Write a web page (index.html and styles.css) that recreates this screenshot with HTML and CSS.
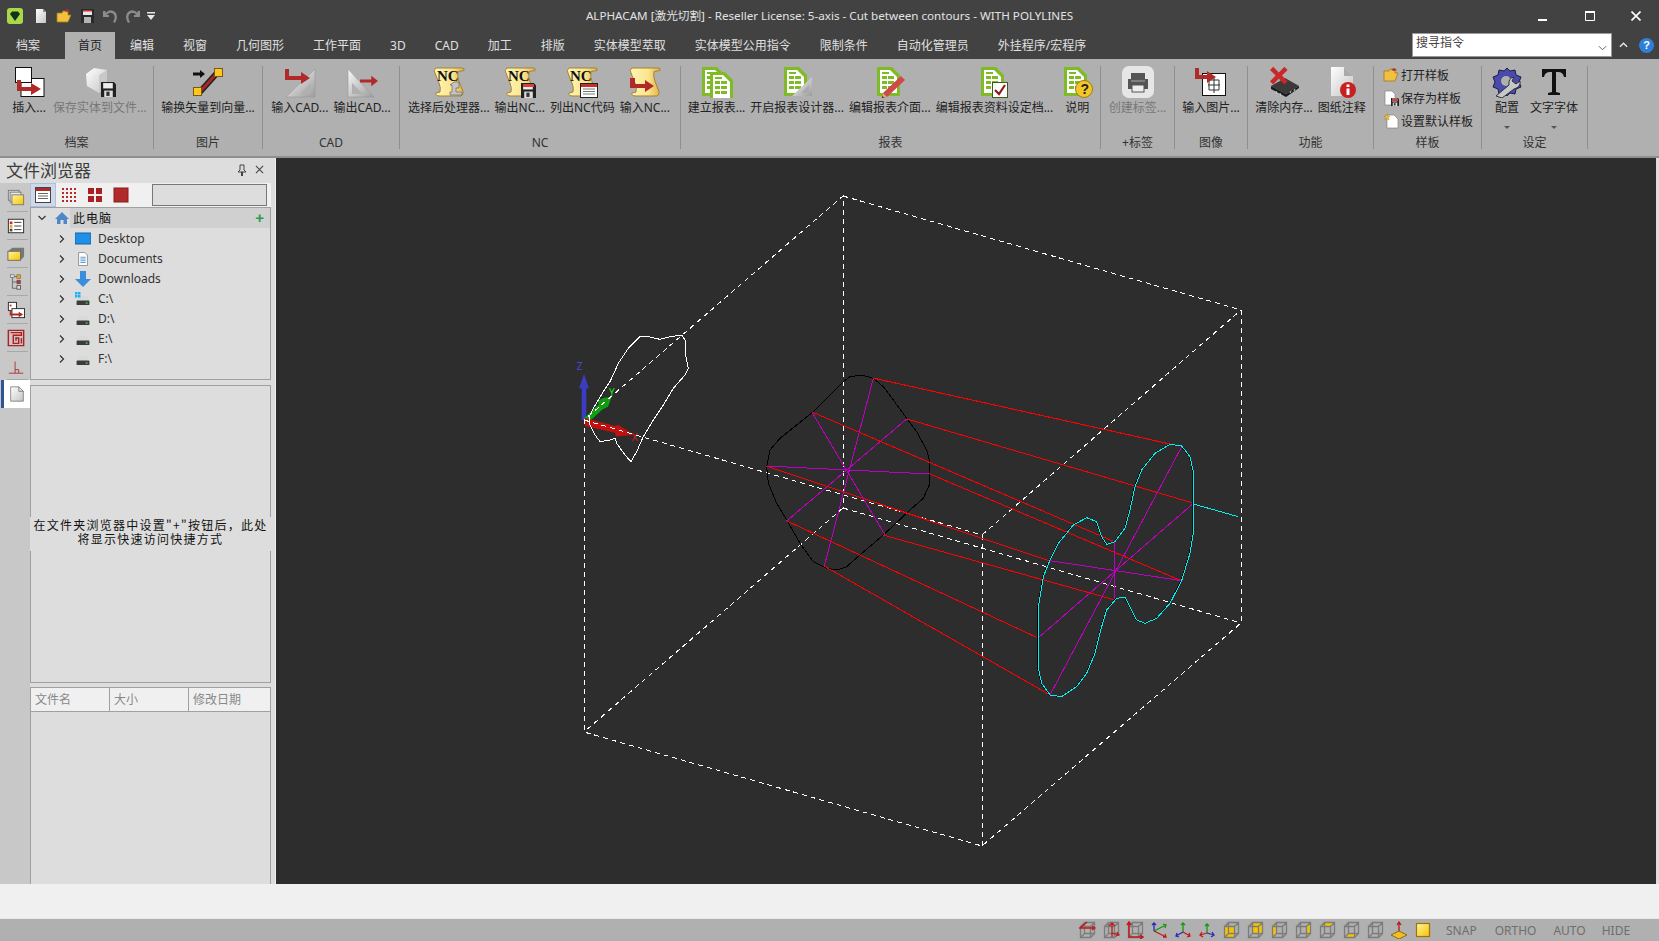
FILE: index.html
```html
<!DOCTYPE html>
<html lang="zh">
<head>
<meta charset="utf-8">
<title>ALPHACAM</title>
<link rel="stylesheet" href="styles.css">
</head>
<body>
<svg class="defs" width="0" height="0">
  <defs>
    <linearGradient id="gs" x1="0" y1="0" x2="1" y2="0"><stop offset="0" stop-color="#fff6b8"/><stop offset=".6" stop-color="#fbe58c"/><stop offset="1" stop-color="#e0b04c"/></linearGradient>
    <linearGradient id="gy" x1="0" y1="0" x2="1" y2="1"><stop offset="0" stop-color="#fff4a0"/><stop offset="1" stop-color="#f5c400"/></linearGradient>
    <linearGradient id="gw" x1="0" y1="0" x2="1" y2="1"><stop offset="0" stop-color="#fff"/><stop offset="1" stop-color="#c4c4c4"/></linearGradient>
    <linearGradient id="gt" x1="0" y1="0" x2="1" y2="1"><stop offset="0" stop-color="#fafafa"/><stop offset="1" stop-color="#9c9c9c"/></linearGradient>
    <symbol id="scrollbg" viewBox="0 0 32 32"><path d="M3 2H29q3 0 2 2.500l-6 1q-1 5 1 10t4 10q1 3-2 4.500H7q-5 0-4-3l4-1q1-4-1-9T2 7Q0 4 3 2z" fill="url(#gs)" stroke="#a8812c"/></symbol>
    <symbol id="scroll" viewBox="0 0 32 32"><use href="#scrollbg"/><text x="4" y="15" class="nc">NC</text></symbol>
    <symbol id="floppy" viewBox="0 0 14 14"><path d="M0 0H12L14 2V14H0z" fill="#222"/><rect x="2" y="1" width="9" height="5" fill="#eee"/><rect x="3" y="8" width="8" height="6" fill="#ddd"/><rect x="5" y="9" width="3" height="4" fill="#333"/></symbol>
    <symbol id="arrow" viewBox="0 0 24 14"><path d="M0 5H15V0L24 7 15 14V9H0z" fill="#b02a2a"/></symbol>
    <symbol id="rep" viewBox="0 0 32 32"><path d="M3 1H18L26 9V30H3z" fill="#7fba27"/><path d="M6 4H16L23 11V27H6z" fill="#fff"/><path d="M8 6h7v2H8zM8 10h5v3H8zM14 10h6v3h-6zM8 15h5v3H8zM14 15h6v3h-6zM8 20h5v3H8zM14 20h6v3h-6z" fill="#7fba27"/></symbol>
    <symbol id="cube" viewBox="0 0 18 18"><path d="M2.500 5.500h10v11h-10zM6.500 1.500h10v11h-10zM2.500 5.500l4-4M12.500 5.500l4-4M2.500 16.500l4-4M12.500 16.500l4-4" fill="none" stroke="#7c7c7c" stroke-width="1.300"/></symbol>
    <symbol id="drive" viewBox="0 0 16 12"><path d="M3 1H12L15 6H1z" fill="#d9d9d9"/><rect x="1" y="6" width="14" height="5" rx="1" fill="#3c3c3c"/><rect x="11" y="8" width="2" height="1.500" fill="#4bd04b"/></symbol>
  </defs>
</svg>

<header class="titlebar">
  <div class="qat">
    <svg class="logo" viewBox="0 0 16 16"><rect width="16" height="16" rx="3" fill="#a9d94a"/><path d="M8 13L3 6 5 3.500H11L13 6z" fill="#17301a"/></svg>
    <svg class="qi" viewBox="0 0 16 16"><path d="M3 1H10L13 4V15H3z" fill="url(#gw)"/><path d="M10 1V4H13z" fill="#8a8a8a"/></svg>
    <svg class="qi" viewBox="0 0 16 16"><path d="M1 5H6L7 3H12V7H15L12 14H1z" fill="#f0c040" stroke="#a87818" stroke-width=".8"/><path d="M8 3l3-2 3 2-3 1z" fill="#b03030"/></svg>
    <svg class="qi" viewBox="0 0 16 16"><rect x="2" y="1" width="13" height="14" fill="#2a2a2a"/><rect x="4" y="2" width="9" height="5" fill="#e8e8e8"/><rect x="4" y="2" width="9" height="1.500" fill="#c03030"/><rect x="5" y="9" width="7" height="6" fill="#b4b4b4"/></svg>
    <svg class="qi" viewBox="0 0 16 16"><path d="M1 3V9H7V7H4.500Q8 3 11.500 6 14 9 11 14L13 15Q17 8 13 4 8 0 3.500 5V3z" fill="#8c8c8c"/></svg>
    <svg class="qi" viewBox="0 0 16 16"><path d="M15 3V9H9V7H11.500Q8 3 4.500 6 2 9 5 14L3 15Q-1 8 3 4 8 0 12.500 5V3z" fill="#8c8c8c"/></svg>
    <svg class="qd" viewBox="0 0 8 8"><path d="M0 0H8V1.500H0zM0 3H8L4 8z" fill="#e6e6e6"/></svg>
  </div>
  <div class="apptitle">ALPHACAM [激光切割] - Reseller License: 5-axis - Cut between contours - WITH POLYLINES</div>
  <div class="winbtns">
    <svg class="wmin" viewBox="0 0 10 10"><rect y="7" width="9" height="2" fill="#fff"/></svg>
    <svg class="wmax" viewBox="0 0 10 10"><path d="M.5 1.500h9v8h-9z" fill="none" stroke="#fff"/><rect width="10" height="2" fill="#fff"/></svg>
    <svg class="wcls" viewBox="0 0 10 10"><path d="M.5.5l9 9M9.500.5l-9 9" stroke="#fff" stroke-width="1.600"/></svg>
  </div>
</header>

<nav class="tabs">
  <div class="tab first">档案</div><div class="tab active">首页</div><div class="tab">编辑</div><div class="tab">视窗</div><div class="tab">几何图形</div><div class="tab">工作平面</div><div class="tab">3D</div><div class="tab">CAD</div><div class="tab">加工</div><div class="tab">排版</div><div class="tab">实体模型萃取</div><div class="tab">实体模型公用指令</div><div class="tab">限制条件</div><div class="tab">自动化管理员</div><div class="tab">外挂程序/宏程序</div>
  <div class="search"><span>搜寻指令</span><svg class="chev" viewBox="0 0 10 6"><path d="M1 1l4 4 4-4" fill="none" stroke="#555"/></svg></div>
  <svg class="up" viewBox="0 0 10 6"><path d="M1 5l4-4 4 4" fill="none" stroke="#e8e8e8" stroke-width="1.600"/></svg>
  <div class="help">?</div>
</nav>

<section class="ribbon">
  <div class="group g1">
    <div class="btns">
      <div class="rb"><svg class="ico" viewBox="0 0 32 32"><rect x="8" y="12.500" width="23" height="18" fill="#fff" stroke="#111"/><rect x="2.500" y="1.500" width="16" height="15" fill="#fff" stroke="#111"/><path d="M4 14h4v7H18V17l10 6-10 6V25H4z" fill="#b02a2a"/></svg><span>插入...</span></div>
      <div class="rb off"><svg class="ico" viewBox="0 0 32 32"><path d="M2 8L10 2 23 4V19L15 27 3 20z" fill="url(#gw)"/><path d="M15 9L23 4V19L15 27z" fill="#c8c8c8"/><use href="#floppy" x="17" y="16" width="15" height="15"/></svg><span>保存实体到文件...</span></div>
    </div>
    <div class="glabel">档案</div>
  </div>
  <div class="group g2">
    <div class="btns">
      <div class="rb"><svg class="ico" viewBox="0 0 32 32"><path d="M7 27L25 7" stroke="#222" stroke-width="6"/><path d="M7 27L25 7" stroke="#a82828" stroke-width="3"/><rect x="1.500" y="21.500" width="8" height="8" fill="#ffc820" stroke="#7a5a10"/><rect x="22.500" y="2.500" width="8" height="8" fill="#ffc820" stroke="#7a5a10"/><path d="M1 6.500H8V4L13 8 8 12V9.500H1z" fill="#111"/></svg><span>输换矢量到向量...</span></div>
    </div>
    <div class="glabel">图片</div>
  </div>
  <div class="group g3">
    <div class="btns">
      <div class="rb"><svg class="ico" viewBox="0 0 32 32"><path d="M31 3V31H2z" fill="url(#gt)" stroke="#999" stroke-width=".6"/><path d="M27 17V28H16z" fill="#b0b0b0"/><path d="M1 3H5V10H17V6L26 12 17 18V14H1z" fill="#b02a2a"/></svg><span>输入CAD...</span></div>
      <div class="rb"><svg class="ico" viewBox="0 0 32 32"><path d="M2 3V31H28z" fill="url(#gt)" stroke="#999" stroke-width=".6"/><path d="M6 17V28H17z" fill="#b0b0b0"/><use href="#arrow" x="14" y="9" width="18" height="12"/></svg><span>输出CAD...</span></div>
    </div>
    <div class="glabel">CAD</div>
  </div>
  <div class="group g4">
    <div class="btns">
      <div class="rb"><svg class="ico" viewBox="0 0 32 32"><use href="#scroll"/><path d="M21 16h5v6h-3v4h6v3H17v-3h2v-7h-2z" fill="#c4c4c4" stroke="#666" stroke-width=".7"/></svg><span>选择后处理器...</span></div>
      <div class="rb"><svg class="ico" viewBox="0 0 32 32"><use href="#scroll"/><use href="#floppy" x="17" y="17" width="15" height="15"/><rect x="19" y="18" width="11" height="3" fill="#d84040"/></svg><span>输出NC...</span></div>
      <div class="rb"><svg class="ico" viewBox="0 0 32 32"><use href="#scroll"/><rect x="14.500" y="17.500" width="17" height="14" fill="#fff" stroke="#222"/><rect x="15" y="18" width="16" height="3" fill="#c03030"/><path d="M17 23h12M17 25.500h12M17 28h12" stroke="#777"/></svg><span>列出NC代码</span></div>
      <div class="rb"><svg class="ico" viewBox="0 0 32 32"><use href="#scrollbg"/><path d="M1 12H6V18H16V14L25 20 16 26V22H1z" fill="#b02a2a"/></svg><span>输入NC...</span></div>
    </div>
    <div class="glabel">NC</div>
  </div>
  <div class="group g5">
    <div class="btns">
      <div class="rb"><svg class="ico" viewBox="0 0 32 32"><use href="#rep" x="-2" y="0" width="32" height="32"/><use href="#rep" x="6" y="5" width="32" height="32"/></svg><span>建立报表...</span></div>
      <div class="rb"><svg class="ico" viewBox="0 0 32 32"><use href="#rep"/><path d="M31 11V30H11z" fill="url(#gt)"/><path d="M28 19V27H20z" fill="#aaa"/></svg><span>开启报表设计器...</span></div>
      <div class="rb"><svg class="ico" viewBox="0 0 32 32"><use href="#rep"/><path d="M27 10l4 4-18 17-5 1 1-5z" fill="#d04848"/><path d="M8 32l1-5 4 4z" fill="#d8b060"/><path d="M8 32l.5-2 1.500 1.500z" fill="#111"/></svg><span>编辑报表介面...</span></div>
      <div class="rb"><svg class="ico" viewBox="0 0 32 32"><use href="#rep"/><rect x="14.500" y="16.500" width="15" height="15" fill="#fff" stroke="#3a5a20"/><path d="M17 24l4 4 6-9" fill="none" stroke="#901818" stroke-width="2.200"/></svg><span>编辑报表资料设定档...</span></div>
      <div class="rb wide"><svg class="ico" viewBox="0 0 32 32"><use href="#rep"/><circle cx="23" cy="23" r="8.500" fill="#f2c628" stroke="#a07a10"/><text x="19.500" y="28" class="qm">?</text></svg><span>说明</span></div>
    </div>
    <div class="glabel">报表</div>
  </div>
  <div class="group g6">
    <div class="btns">
      <div class="rb off"><svg class="ico" viewBox="0 0 32 32"><rect width="32" height="32" rx="7" fill="#e6e6e6"/><path d="M9 7H23V13H9zM6 13H26V23H6z" fill="#555"/><rect x="10" y="19" width="12" height="7" fill="#eee" stroke="#555"/><path d="M9 15h14" stroke="#aaa"/></svg><span>创建标签...</span></div>
    </div>
    <div class="glabel">+标签</div>
  </div>
  <div class="group g7">
    <div class="btns">
      <div class="rb"><svg class="ico" viewBox="0 0 32 32"><rect x="7.500" y="7.500" width="23" height="22" fill="#fff" stroke="#111"/><path d="M19 11V27M13 19H25M14 14h10v10H14z" fill="none" stroke="#333"/><path d="M0 2H4V9H12V5L21 11 12 17V13H0z" fill="#b02a2a"/></svg><span>输入图片...</span></div>
    </div>
    <div class="glabel">图像</div>
  </div>
  <div class="group g8">
    <div class="btns">
      <div class="rb"><svg class="ico" viewBox="0 0 32 32"><path d="M3 20L17 12 31 20 18 28z" fill="#3a3a3a"/><path d="M3 20L18 28V31L3 23zM18 28L31 20V22L18 31z" fill="#1c1c1c"/><path d="M8 25l1 3M12 27l1 3M22 27l1-2M26 25l1-2" stroke="#ccc"/><path d="M4 1L11 8 18 1 22 5 15 12 22 19 18 23 11 16 4 23 0 19 7 12 0 5z" transform="translate(2 0) scale(.8)" fill="#c82828"/></svg><span>清除内存...</span></div>
      <div class="rb"><svg class="ico" viewBox="0 0 32 32"><path d="M5 1H18L27 10V30H5z" fill="url(#gw)"/><path d="M18 1V10H27z" fill="#aaa"/><circle cx="22" cy="24" r="8" fill="#c82020"/><path d="M20.500 22.500h3V29h-3zM20.500 18.500h3v2.500h-3z" fill="#fff"/></svg><span>图纸注释</span></div>
    </div>
    <div class="glabel">功能</div>
  </div>
  <div class="group g9">
    <div class="stack">
      <div class="sb"><svg class="si" viewBox="0 0 16 16"><path d="M1 4H6L7 2H12V6H15L12 14H1z" fill="#f0c040" stroke="#a87818" stroke-width=".8"/><path d="M8 3l3-2 3 2-3 1z" fill="#b03030"/></svg><span>打开样板</span></div>
      <div class="sb"><svg class="si" viewBox="0 0 16 16"><path d="M2 1H9L12 4V15H2z" fill="#fff" stroke="#777" stroke-width=".6"/><use href="#floppy" x="8" y="8" width="8" height="8"/><rect x="9" y="9" width="6" height="2" fill="#d84040"/></svg><span>保存为样板</span></div>
      <div class="sb"><svg class="si" viewBox="0 0 16 16"><path d="M4 2H11L15 6V15H4z" fill="#fff" stroke="#777" stroke-width=".6"/><path d="M4 1l1 2 2 0-1.500 1.500L6 7 4 5.500 2 7l.5-2.500L1 3l2 0z" fill="#f0c020" stroke="#a07a10" stroke-width=".4"/></svg><span>设置默认样板</span></div>
    </div>
    <div class="glabel">样板</div>
  </div>
  <div class="group g10">
    <div class="btns">
      <div class="rb"><svg class="ico" viewBox="0 0 32 32"><path d="M16 2l3 3 5-1 1 5 5 2-2 5 2 5-5 2-1 5-5-1-3 3-3-3-5 1-1-5-5-2 2-5-2-5 5-2 1-5 5 1z" fill="#4a4aa8" stroke="#1c1c50"/><circle cx="15" cy="15" r="5" fill="#b0b0b0"/><path d="M5 30L18 19Q17 12 23 11L21 15 25 18 29 15Q30 21 23 23L11 32z" fill="#c8c8c8" stroke="#333"/></svg><span>配置</span><svg class="drop" viewBox="0 0 6 3"><path d="M0 0H6L3 3z" fill="#555"/></svg></div>
      <div class="rb"><svg class="ico" viewBox="0 0 32 32"><path d="M4 3H28V11H26Q25 6 20 6H18V26L22 27V29H10V27L14 26V6H12Q7 6 6 11H4z" fill="#111"/></svg><span>文字字体</span><svg class="drop" viewBox="0 0 6 3"><path d="M0 0H6L3 3z" fill="#555"/></svg></div>
    </div>
    <div class="glabel">设定</div>
  </div>
</section>

<main class="main">
  <aside class="panel">
    <div class="phead">
      <div class="ptitle">文件浏览器</div>
      <svg class="pin" viewBox="0 0 10 12"><path d="M3 1H7V6L9 8H1L3 6zM4.500 8V12H5.500V8z" fill="none" stroke="#444"/></svg>
      <svg class="pclose" viewBox="0 0 10 10"><path d="M1 1l8 8M9 1l-8 8" stroke="#444" stroke-width="1.200"/></svg>
    </div>
    <div class="pbody">
      <div class="side">
        <div class="si-item"><svg class="sic" viewBox="0 0 20 20"><rect x="1.500" y="1.500" width="12" height="11" fill="#ddd" stroke="#777"/><rect x="3.500" y="3.500" width="12" height="11" fill="#e8e8e8" stroke="#777"/><rect x="5.500" y="6.500" width="13" height="11" fill="url(#gy)" stroke="#777"/></svg></div>
        <div class="si-item"><svg class="sic" viewBox="0 0 20 20"><rect x="1.500" y="2.500" width="17" height="15" fill="#fff" stroke="#222"/><rect x="3" y="5" width="3" height="3" fill="#c03030"/><rect x="3" y="9" width="3" height="3" fill="#e8a820"/><rect x="3" y="13" width="3" height="3" fill="#4a4a4a"/><path d="M8 6h8M8 10h8M8 14h8" stroke="#333"/></svg></div>
        <div class="si-item"><svg class="sic" viewBox="0 0 20 20"><path d="M1 7L6 3H19V13L15 17V7z" fill="#777"/><rect x="1" y="7" width="14" height="10" fill="url(#gy)" stroke="#666"/></svg></div>
        <div class="si-item"><svg class="sic" viewBox="0 0 20 20"><path d="M6 4V17H11M6 10H11M6 4H11" fill="none" stroke="#666"/><rect x="11" y="2" width="4" height="4" fill="#e8a820" stroke="#555" stroke-width=".6"/><rect x="11" y="8" width="4" height="4" fill="#c03030" stroke="#555" stroke-width=".6"/><rect x="11" y="14" width="4" height="4" fill="#ddd" stroke="#555"/><rect x="4" y="2" width="4" height="3" fill="#ddd" stroke="#555" stroke-width=".6"/></svg></div>
        <div class="si-item"><svg class="sic" viewBox="0 0 20 20"><rect x="1.500" y="1.500" width="9" height="9" fill="#fff" stroke="#222"/><rect x="5.500" y="8.500" width="14" height="10" fill="#fff" stroke="#222"/><path d="M3 4h2v2H3z" fill="#c03030"/><path d="M3 10h2v4h8v-2l5 3-5 3v-2H3z" fill="#b02a2a"/></svg></div>
        <div class="si-item"><svg class="sic" viewBox="0 0 20 20"><path d="M1.500 1.500H18.500V18.500H1.500zM4 4H16V7H7V16H13V10H10V13M16 10V16" fill="none" stroke="#b02020" stroke-width="1.600"/></svg></div>
        <div class="si-item"><svg class="sic" viewBox="0 0 20 20"><path d="M2 18H18M9 5V18M9 14H13V18" fill="none" stroke="#a83030"/></svg></div>
        <div class="si-item sel"><svg class="sic" viewBox="0 0 20 20"><path d="M3 2H12L17 7V18H3z" fill="url(#gw)" stroke="#555" stroke-width=".7"/><path d="M12 2V7H17" fill="none" stroke="#555" stroke-width=".7"/></svg></div>
      </div>
      <div class="panes">
        <div class="ptool">
          <div class="vb cur"><svg class="vi" viewBox="0 0 16 16"><rect x=".5" y=".5" width="15" height="15" fill="#fff" stroke="#444"/><rect x="1" y="1" width="14" height="3" fill="#b02a2a"/><path d="M3 6.500h10M3 9h10M3 11.500h10" stroke="#666"/></svg></div>
          <div class="vb"><svg class="vi" viewBox="0 0 16 16"><path d="M1 1h2v2H1zM5 1h2v2H5zM9 1h2v2H9zM13 1h2v2h-2zM1 5h2v2H1zM5 5h2v2H5zM9 5h2v2H9zM13 5h2v2h-2zM1 9h2v2H1zM5 9h2v2H5zM9 9h2v2H9zM13 9h2v2h-2zM1 13h2v2H1zM5 13h2v2H5zM9 13h2v2H9zM13 13h2v2h-2z" fill="#b02a2a"/></svg></div>
          <div class="vb"><svg class="vi" viewBox="0 0 16 16"><path d="M1 1h6v6H1zM9 1h6v6H9zM1 9h6v6H1zM9 9h6v6H9z" fill="#a82020"/></svg></div>
          <div class="vb"><svg class="vi" viewBox="0 0 16 16"><rect x="1" y="1" width="14" height="14" fill="#b02a2a" stroke="#8a1a1a"/></svg></div>
          <div class="pfilter"></div>
        </div>
        <div class="tree">
          <div class="troot">
            <svg class="tw" viewBox="0 0 10 10"><path d="M1.500 3L5 6.500 8.500 3" fill="none" stroke="#333" stroke-width="1.200"/></svg>
            <svg class="home" viewBox="0 0 14 14"><path d="M7 1L14 8H12V13H8.500V9H5.500V13H2V8H0z" fill="#4f87c9"/></svg>
            <div class="rootname"><span>此电脑</span><b>+</b></div>
          </div>
          <div class="trow"><svg class="tw" viewBox="0 0 10 10"><path d="M3 1.500L6.500 5 3 8.500" fill="none" stroke="#333" stroke-width="1.200"/></svg><svg class="ti" viewBox="0 0 16 14"><rect y="1" width="16" height="11" fill="#1f8fe8" stroke="#1565a8"/></svg><span>Desktop</span></div>
          <div class="trow"><svg class="tw" viewBox="0 0 10 10"><path d="M3 1.500L6.500 5 3 8.500" fill="none" stroke="#333" stroke-width="1.200"/></svg><svg class="ti" viewBox="0 0 16 16"><path d="M3 .5H10L13 3.500V15.500H3z" fill="#fff" stroke="#888"/><path d="M5 6h6M5 8h6M5 10h6M5 12h6" stroke="#4d8fd0"/></svg><span>Documents</span></div>
          <div class="trow"><svg class="tw" viewBox="0 0 10 10"><path d="M3 1.500L6.500 5 3 8.500" fill="none" stroke="#333" stroke-width="1.200"/></svg><svg class="ti big" viewBox="0 0 16 16"><path d="M5 0H11V8H16L8 16 0 8H5z" fill="#3a8fdc"/></svg><span>Downloads</span></div>
          <div class="trow"><svg class="tw" viewBox="0 0 10 10"><path d="M3 1.500L6.500 5 3 8.500" fill="none" stroke="#333" stroke-width="1.200"/></svg><svg class="ti" viewBox="0 0 16 14"><use href="#drive" y="3" width="16" height="11"/><path d="M0 0h2.500v2.500H0zM3 0h2.500v2.500H3zM0 3h2.500v2.500H0zM3 3h2.500v2.500H3z" fill="#18b4f0"/></svg><span>C:\</span></div>
          <div class="trow"><svg class="tw" viewBox="0 0 10 10"><path d="M3 1.500L6.500 5 3 8.500" fill="none" stroke="#333" stroke-width="1.200"/></svg><svg class="ti" viewBox="0 0 16 14"><use href="#drive" y="3" width="16" height="11"/></svg><span>D:\</span></div>
          <div class="trow"><svg class="tw" viewBox="0 0 10 10"><path d="M3 1.500L6.500 5 3 8.500" fill="none" stroke="#333" stroke-width="1.200"/></svg><svg class="ti" viewBox="0 0 16 14"><use href="#drive" y="3" width="16" height="11"/></svg><span>E:\</span></div>
          <div class="trow"><svg class="tw" viewBox="0 0 10 10"><path d="M3 1.500L6.500 5 3 8.500" fill="none" stroke="#333" stroke-width="1.200"/></svg><svg class="ti" viewBox="0 0 16 14"><use href="#drive" y="3" width="16" height="11"/></svg><span>F:\</span></div>
        </div>
        <div class="quick">
          <div class="qmsg">在文件夹浏览器中设置"+"按钮后，此处<br>将显示快速访问快捷方式</div>
        </div>
        <div class="list">
          <div class="lhead"><div class="c1">文件名</div><div class="c2">大小</div><div class="c3">修改日期</div></div>
        </div>
      </div>
    </div>
  </aside>

  <div class="view">
    <svg class="canvas" viewBox="276 158 1380 726" width="1380" height="726">
      <g transform="translate(560 320) scale(.33333)">
        <path d="M65 300V205H57L72 162 87 205H79V300z" fill="#3c3cc0"/>
        <path d="M70 296L118 252 113 244 130 234 155 230 144 260 128 268 82 310z" fill="#12a012"/>
        <circle cx="130" cy="250" r="14" fill="#109a10"/>
        <path d="M75 294L165 318 175 315 224 345 168 349 165 338 75 318z" fill="#c01010"/>
        <text x="50" y="149" class="ax az">Z</text>
        <text x="147" y="229" class="ax ay">Y</text>
        <text x="215" y="362" class="ax ar">X</text>
      </g>
      <g class="dash">
        <path d="M843 196L1241 310V623L982 846L584 732V420L843 196V508"/>
        <path d="M843 508L584 732"/>
        <path d="M843 508L1241 623"/>
        <path d="M584 420L982 535V846"/>
        <path d="M982 535L1241 310"/>
      </g>
      <g class="wire">
        <g transform="translate(560 320) scale(.33333)">
          <path class="white" d="M88 290L100 265 130 215 150 185 175 130 205 85 240 50 265 50 300 58 330 50 365 45 375 60 378 110 385 145 375 165 340 205 310 255 280 300 250 350 230 395 213 425 195 405 170 370 165 355 150 360 120 365 105 345 88 310z"/>
          <path class="black" d="M905 165L870 170 850 185 760 275 660 355 630 390 620 440 625 490 650 550 680 600 720 670 760 725 800 745 830 750 860 740 900 705 970 645 1050 570 1090 535 1110 490 1110 430 1100 390 1070 335 1040 295 1000 240 970 200 940 175z"/>
          <path class="mag" d="M940 175L793 738M755 275L975 645M1040 297L680 603M618 438L1110 462"/>
        </g>
        <g class="red">
          <path d="M873 378L1170 444M907 419L1193 503M812 412L1115 542M930 474L1182 581M766 466L1050 561M883 535L1115 600M787 521L1038 638M824 566L1050 695"/>
        </g>
        <g transform="translate(960 420) scale(.33333)">
          <path class="mag" d="M665 80L270 825M700 250L235 653M270 422L665 482M465 365V540"/>
          <path class="black" transform="translate(-2 0)" d="M630 73L665 78 690 110 700 155 700 340 690 400 665 482 630 550 590 595 555 610 530 600 515 570 495 532 470 535 440 570 425 620 405 700 380 760 350 800 305 830 270 825 245 790 235 745 235 560 250 470 270 420 295 370 340 315 380 293 410 305 425 350 440 373 465 365 495 325 510 270 525 200 545 150 585 100z"/>
          <path class="cyan" d="M630 73L665 78 690 110 700 155 700 340 690 400 665 482 630 550 590 595 555 610 530 600 515 570 495 532 470 535 440 570 425 620 405 700 380 760 350 800 305 830 270 825 245 790 235 745 235 560 250 470 270 420 295 370 340 315 380 293 410 305 425 350 440 373 465 365 495 325 510 270 525 200 545 150 585 100zM700 252L835 290"/>
        </g>
      </g>
    </svg>
  </div>
</main>

<div class="cmd"></div>

<footer class="status">
  <svg class="st" viewBox="0 0 18 18"><use href="#cube"/><path d="M1 7H17M14 5l3 2-3 2M9 1L2 7" fill="none" stroke="#c01818" stroke-width="1.300"/></svg>
  <svg class="st" viewBox="0 0 18 18"><use href="#cube"/><path d="M10 16V2M7 5l3-3 3 3M10 12L17 14M15 11l2 3-3 1" fill="none" stroke="#c01818" stroke-width="1.300"/></svg>
  <svg class="st" viewBox="0 0 18 18"><use href="#cube"/><path d="M3 1V16H17M1 4l2-3 2 3M14 14l3 2-3 2" fill="none" stroke="#c01818" stroke-width="1.500"/></svg>
  <svg class="st" viewBox="0 0 18 18"><path d="M4 10V2M2 4l2-2 2 2" fill="none" stroke="#2828c0" stroke-width="1.300"/><path d="M4 10L16 4M13 3l3 1-1 3" fill="none" stroke="#109a10" stroke-width="1.300"/><path d="M4 10L16 16M13 16l3 0-1-3" fill="none" stroke="#c01818" stroke-width="1.300"/></svg>
  <svg class="st" viewBox="0 0 18 18"><path d="M9 11V2M7 4l2-2 2 2" fill="none" stroke="#109a10" stroke-width="1.300"/><path d="M9 11L2 15M3 12l-1 3 3 1" fill="none" stroke="#2828c0" stroke-width="1.300"/><path d="M9 11L16 15M15 12l1 3-3 1" fill="none" stroke="#c01818" stroke-width="1.300"/></svg>
  <svg class="st" viewBox="0 0 18 18"><path d="M9 12V3M7 5l2-2 2 2" fill="none" stroke="#109a10" stroke-width="1.300"/><path d="M9 12L2 14M4 11l-2 3 3 2" fill="none" stroke="#c01818" stroke-width="1.300"/><path d="M9 12L16 14M14 11l2 3-3 2" fill="none" stroke="#2828c0" stroke-width="1.300"/></svg>
  <svg class="st" viewBox="0 0 18 18"><rect x="2.500" y="5.500" width="10" height="11" fill="#f5c400"/><use href="#cube"/></svg>
  <svg class="st" viewBox="0 0 18 18"><rect x="6.500" y="1.500" width="10" height="11" fill="#f5c400"/><use href="#cube"/></svg>
  <svg class="st" viewBox="0 0 18 18"><path d="M2.500 5.500l4-4v11l-4 4z" fill="#f5c400"/><use href="#cube"/></svg>
  <svg class="st" viewBox="0 0 18 18"><path d="M12.500 5.500l4-4v11l-4 4z" fill="#f5c400"/><use href="#cube"/></svg>
  <svg class="st" viewBox="0 0 18 18"><path d="M2.500 5.500l4-4h10l-4 4z" fill="#f5c400"/><use href="#cube"/></svg>
  <svg class="st" viewBox="0 0 18 18"><path d="M2.500 16.500l4-4h10l-4 4z" fill="#f5c400"/><use href="#cube"/></svg>
  <svg class="st" viewBox="0 0 18 18"><use href="#cube"/></svg>
  <svg class="st" viewBox="0 0 18 18"><path d="M9 11V1M7 4l2-3 2 3" fill="none" stroke="#c01818" stroke-width="1.300"/><path d="M9 10L17 14 9 18 1 14z" fill="#f0c020" stroke="#8a6a10"/></svg>
  <svg class="st" viewBox="0 0 18 18"><rect x="2.500" y="2.500" width="13" height="13" fill="url(#gy)" stroke="#a0720c" stroke-width="1.200"/></svg>
  <div class="slabels"><span>SNAP</span><span>ORTHO</span><span>AUTO</span><span>HIDE</span></div>
</footer>
</body>
</html>
```

FILE: styles.css
```css
* { box-sizing: border-box; }
html, body { margin: 0; padding: 0; }
body {
  width: 1659px; height: 941px; overflow: hidden;
  display: flex; flex-direction: column;
  background: #424242;
  font-family: "Noto Sans", "Noto Sans CJK SC", sans-serif;
  font-size: 12px; color: #222;
}
.defs { flex: none; }
svg { flex: none; display: block; }

/* title bar */
.titlebar { height: 32px; flex: none; display: grid; grid-template-columns: 1fr auto 1fr; align-items: center; background: #424242; color: #e2e2e2; }
.qat { display: flex; align-items: center; padding-left: 7px; }
.logo { width: 16px; height: 16px; margin-right: 10px; }
.qi { width: 16px; height: 16px; margin-right: 7px; }
.qd { width: 8px; height: 8px; margin-left: -1px; }
.apptitle { font-size: 11.65px; white-space: nowrap; margin-bottom: 4px; }
.winbtns { display: flex; justify-content: flex-end; align-items: center; }
.wmin { width: 10px; height: 10px; margin-right: 37px; margin-top: 2px; }
.wmax { width: 10px; height: 10px; margin-right: 36px; }
.wcls { width: 10px; height: 10px; margin-right: 18px; }

/* tabs */
.tabs { height: 27px; flex: none; display: flex; align-items: stretch; padding-left: 2px; background: #424242; }
.tab { padding: 6px 14.5px 0; color: #e0e0e0; line-height: 16px; white-space: nowrap; }
.tab.first { padding: 6px 25px 0 14px; }
.tab.active { background: #b0b0b0; color: #222; padding: 6px 13px 0; margin-right: .5px; }
.search { width: 200px; height: 24px; margin: 1px 0 0 auto; background: #fff; border: 1px solid #999; padding: 1px 0 0 3px; display: flex; justify-content: space-between; color: #444; line-height: 14px; font-family: "Noto Sans CJK SC", sans-serif; }
.chev { width: 9px; height: 6px; margin: 10px 4px 0 0; }
.up { width: 9px; height: 6px; margin: 10px 0 0 7px; }
.help { width: 15px; height: 15px; margin: 6px 5px 0 11px; border-radius: 50%; background: #2f7fd8; color: #fff; text-align: center; font: bold 11px/15px "Liberation Sans", sans-serif; }

/* ribbon */
.ribbon { height: 99px; flex: none; background: #b0b0b0; border-bottom: 2px solid #8f8f8f; display: grid; grid-template-columns: 154px 109px 137px 281px 420px 74px 73px 126px 108px 106px 1fr; padding-top: 7px; }
.group { height: 83px; border-right: 1px solid #8f8f8f; display: flex; flex-direction: column; }
.btns { display: flex; justify-content: center; gap: 5px; height: 51px; flex: none; }
.g1 .btns { gap: 7px; padding-left: 6px; }
.g4 .btns { padding-right: 2px; }
.g10 .btns { gap: 7px; }
.rb { display: flex; flex-direction: column; align-items: center; white-space: nowrap; line-height: 16px; color: #222; }
.rb.off { color: #777; }
.rb.wide { margin-left: 3px; }
.ico { width: 32px; height: 32px; margin-bottom: 2px; }
.drop { width: 6px; height: 3px; margin-top: 10px; }
.glabel { text-align: center; line-height: 16px; margin-top: 17.5px; color: #333; }
.stack { display: flex; flex-direction: column; height: 51px; flex: none; gap: 7px; padding: 1px 0 0 9px; }
.sb { display: flex; align-items: center; height: 16px; flex: none; gap: 2px; white-space: nowrap; }
.si { width: 16px; height: 16px; }
.nc { font: bold 15px/1 "Liberation Serif", serif; fill: #111; }
.qm { font: bold 14px/1 "Liberation Sans", sans-serif; fill: #222; }

/* main */
.main { height: 726px; flex: none; display: flex; background: #ddd; }
.panel { width: 276px; flex: none; display: flex; flex-direction: column; background: #ddd; border-right: 1px solid #eee; }
.phead { height: 25px; display: flex; align-items: center; padding: 0 11px 2px 6px; }
.ptitle { flex: 1; font-size: 17px; line-height: 22px; color: #3c3c3c; font-family: "Noto Sans CJK SC", sans-serif; }
.pin { width: 10px; height: 12px; margin-right: 8px; }
.pclose { width: 9px; height: 9px; }
.pbody { flex: 1; display: flex; min-height: 0; }

.side { width: 30px; flex: none; background: #c8c8c8; padding: 1px 0 0 1px; display: flex; flex-direction: column; }
.si-item { height: 28px; flex: none; display: flex; align-items: center; justify-content: center; background: linear-gradient(#a8a8a8, #a8a8a8) no-repeat 6px 100% / 21px 1px; }
.si-item.sel { background: #fff; border-left: 3px solid #2f5596; }
.sic { width: 18px; height: 18px; }

.panes { width: 241px; flex: none; }
.ptool { height: 24px; background: #f0f0f0; display: flex; align-items: center; }
.vb { width: 26px; height: 24px; display: flex; align-items: center; justify-content: center; }
.vb.cur { background: #cdd9ea; border: 1px solid #aebfd8; }
.vi { width: 16px; height: 16px; }
.pfilter { width: 115px; height: 22px; margin-left: 18px; border: 1px solid #777; background: #ddd; }

.tree { height: 173px; border: 1px solid #a0a0a0; color: #333; }
.troot { height: 21px; display: flex; align-items: flex-start; padding-left: 6px; color: #111; }
.troot .tw { margin-top: 5px; }
.home { width: 14px; height: 14px; margin: 3px 1px 0 8px; }
.rootname { flex: 1; height: 20px; display: flex; justify-content: space-between; align-items: center; background: #d0d0d0; padding: 0 6px 2px 3px; }
.rootname span { font-family: "Noto Sans CJK SC", sans-serif; letter-spacing: 1px; }
.rootname b { color: #2a9a4a; font: bold 15px/1 "Liberation Sans", sans-serif; }
.tw { width: 10px; height: 10px; }
.trow { height: 20px; display: flex; align-items: center; padding-left: 26px; line-height: 16px; }
.ti { width: 16px; height: 14px; margin: 0 7px 0 8px; }
.ti.big { height: 16px; }

.quick { height: 298px; margin-top: 5px; border: 1px solid #a0a0a0; display: flex; align-items: flex-start; padding-top: 131px; }
.qmsg { flex: 1; margin: 0 -1px; background: #ddd; height: 34px; padding-top: 1px; text-align: center; line-height: 14px; letter-spacing: 1.25px; color: #111; white-space: nowrap; font-family: "Noto Sans CJK SC", sans-serif; }
.list { height: 198px; margin-top: 4px; border: 1px solid #a0a0a0; }
.lhead { display: grid; grid-template-columns: 78px 79px 1fr; height: 24px; background: #f0f0f0; border-bottom: 1px solid #a0a0a0; color: #888; line-height: 22px; font-family: "Noto Sans CJK SC", sans-serif; }
.lhead div { padding-left: 4px; }
.c2, .c3 { border-left: 1px solid #a0a0a0; }

/* viewport */
.view { width: 1380px; flex: none; height: 726px; background: #2d2d2d; }
.canvas { display: block; }
.dash path { fill: none; stroke: #fff; stroke-width: 1; stroke-dasharray: 5 4; }
.dash, .wire { shape-rendering: crispEdges; }
.wire path { fill: none; stroke-width: 1; vector-effect: non-scaling-stroke; }
.white { stroke: #fff; }
.black { stroke: #000; }
.mag { stroke: #c000c0; }
.red path { stroke: #f00; }
.cyan { stroke: #00f0f0; }
.ax { font: 30px "Noto Sans", sans-serif; }
.az { fill: #4848d0; }
.ay { fill: #20e020; }
.ar { fill: #e01818; }

/* bottom */
.cmd { height: 34px; flex: none; background: #f0f0f0; }
.status { flex: 1; background: #b0b0b0; border-top: 1px solid #e8e8e8; display: flex; align-items: center; padding-left: 1078px; gap: 6px; }
.st { width: 18px; height: 18px; }
.slabels { display: flex; gap: 18px; margin-left: 8px; color: #6e6e6e; font-size: 12px; }
.slabels span:nth-child(3) { margin-left: -1px; }
.slabels span:nth-child(4) { margin-left: -2px; }
```
